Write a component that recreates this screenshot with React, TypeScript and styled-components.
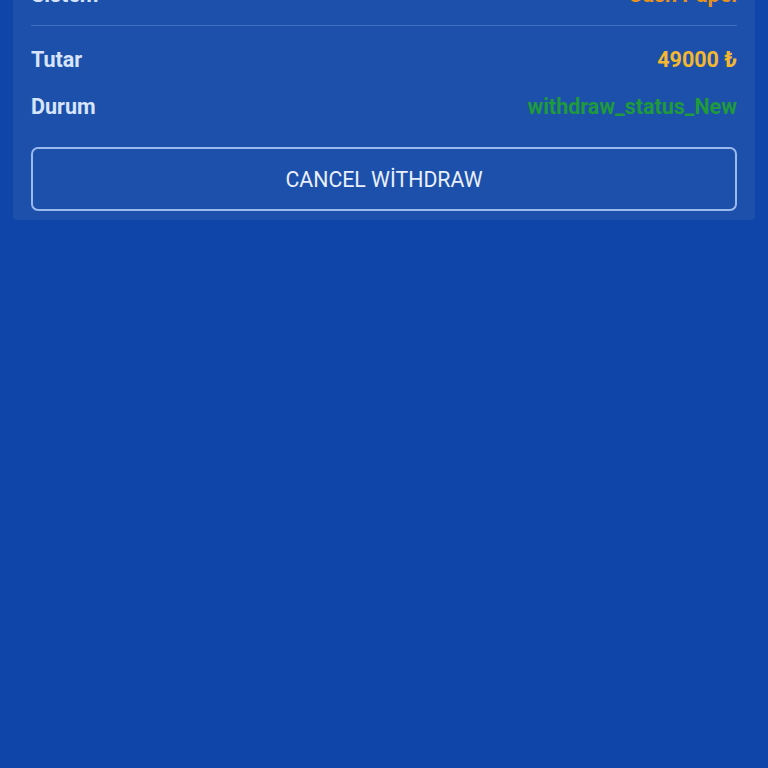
import React from 'react';
import styled, { createGlobalStyle } from 'styled-components';

const GlobalStyle = createGlobalStyle`
  html, body {
    margin: 0;
    padding: 0;
    height: 100%;
    background: #0f45a9;
    font-family: Roboto, "Noto Sans", Arial, sans-serif;
    overflow: hidden;
  }
`;

const Page = styled.div`
  padding: 0 13px;
  margin-top: -43px;
`;

const Card = styled.div`
  background: #1c50aa;
  border-radius: 4px;
  padding: 14px 18px 9px;
  display: flex;
  flex-direction: column;
`;

const Row = styled.div`
  display: flex;
  justify-content: space-between;
  align-items: center;
  height: 47px;
`;

const Label = styled.span`
  font-size: 21.5px;
  font-weight: 700;
  color: #d7e4fb;
`;

const Value = styled.span<{ color: string }>`
  font-size: 21.5px;
  font-weight: 700;
  color: ${props => props.color};
`;

const Divider = styled.div`
  height: 1px;
  background: #3f6ec1;
  margin: 7px 0 10px;
`;

const CancelButton = styled.button`
  margin-top: 17px;
  height: 64px;
  border: 2px solid #9bb9ec;
  border-radius: 7px;
  background: transparent;
  color: #e9effc;
  font-family: Roboto, "Noto Sans", Arial, sans-serif;
  font-size: 21.3px;
  font-weight: 400;
  padding-top: 2px;
  cursor: pointer;
`;

const rows = [
  { label: 'Tutar', value: '49000 ₺', color: '#f4b730' },
  { label: 'Durum', value: 'withdraw_status_New', color: '#1f9a3c' },
];

export default function App() {
  return (
    <>
      <GlobalStyle />
      <Page>
        <Card>
          <Row>
            <Label>Sistem</Label>
            <Value color="#e8921e">Cash Papel</Value>
          </Row>
          <Divider />
          {rows.map(row => (
            <Row key={row.label}>
              <Label>{row.label}</Label>
              <Value color={row.color}>{row.value}</Value>
            </Row>
          ))}
          <CancelButton>CANCEL WİTHDRAW</CancelButton>
        </Card>
      </Page>
    </>
  );
}
